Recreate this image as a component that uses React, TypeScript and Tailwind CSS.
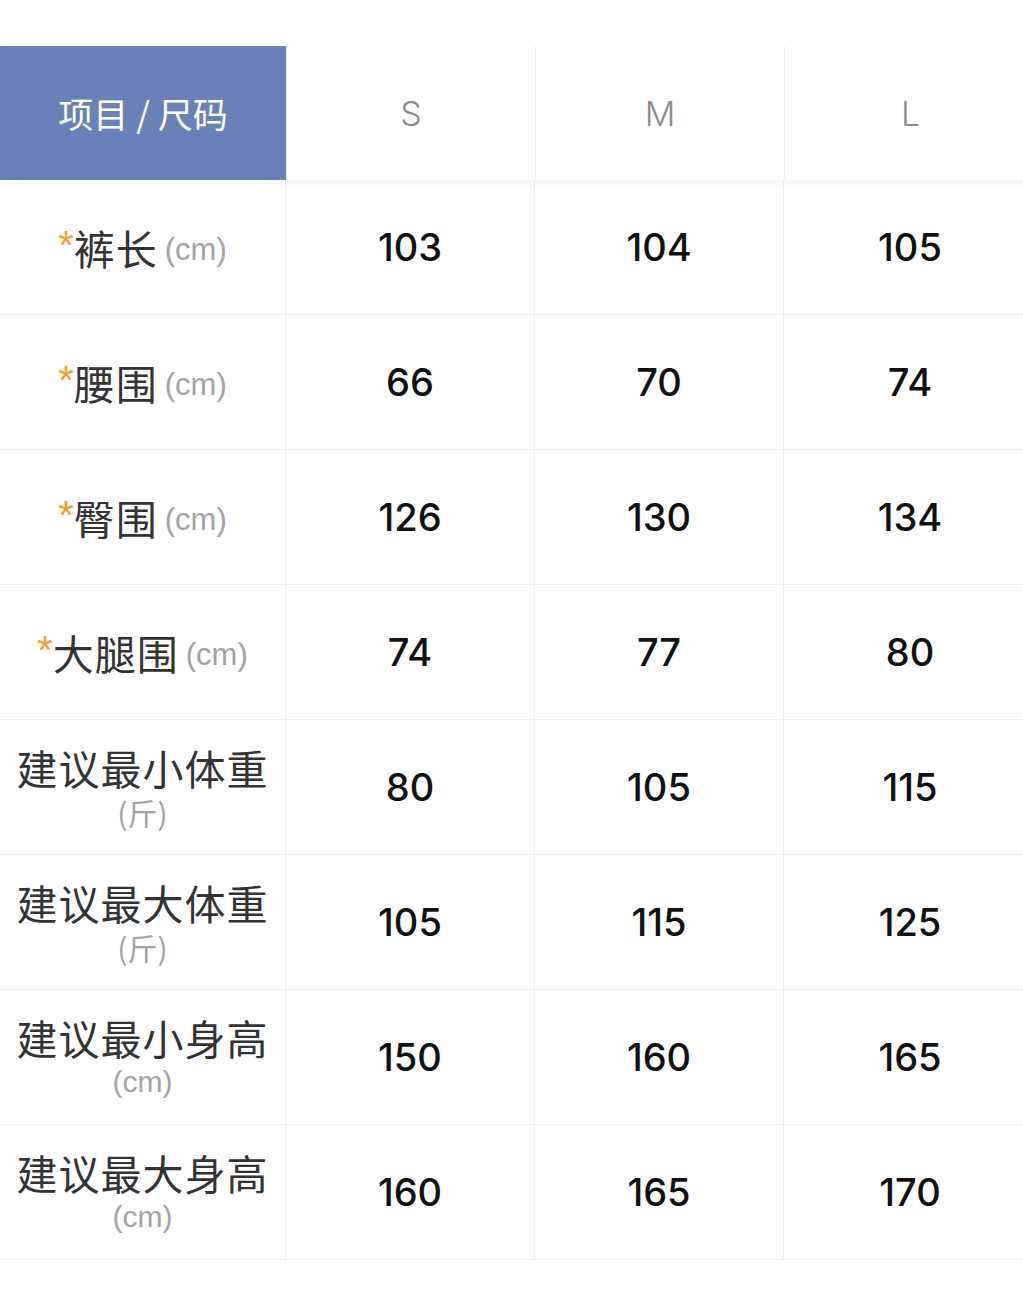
import React from "react";

type Row = {
  label: string;
  unit: string;
  star?: boolean;
  stacked?: boolean;
  values: string[];
};

const rows: Row[] = [
  { label: "裤长", unit: "(cm)", star: true, values: ["103", "104", "105"] },
  { label: "腰围", unit: "(cm)", star: true, values: ["66", "70", "74"] },
  { label: "臀围", unit: "(cm)", star: true, values: ["126", "130", "134"] },
  { label: "大腿围", unit: "(cm)", star: true, values: ["74", "77", "80"] },
  { label: "建议最小体重", unit: "(斤)", stacked: true, values: ["80", "105", "115"] },
  { label: "建议最大体重", unit: "(斤)", stacked: true, values: ["105", "115", "125"] },
  { label: "建议最小身高", unit: "(cm)", stacked: true, values: ["150", "160", "165"] },
  { label: "建议最大身高", unit: "(cm)", stacked: true, values: ["160", "165", "170"] },
];

const cjk = "font-['PingFang_SC','Noto_Sans_CJK_SC',sans-serif]";
const num = "font-['Inter','Noto_Sans',sans-serif]";
const latin = "font-['Liberation_Sans','Noto_Sans_CJK_SC',sans-serif]";

function Label({ row }: { row: Row }) {
  if (row.stacked) {
    return (
      <div className={`flex flex-col items-center ${cjk}`}>
        <span className="text-[41px] leading-[40px] tracking-[1px] text-[#333]">{row.label}</span>
        <span className={`mt-[9px] text-[30px] leading-[32px] text-[#a3a3a3] ${row.unit === "(cm)" ? latin : ""}`}>
          {row.unit}
        </span>
      </div>
    );
  }
  return (
    <div className={`flex items-center ${cjk}`}>
      {row.star && (
        <span className={`mb-[4px] text-[40px] leading-none text-[#f0a030] ${latin}`}>*</span>
      )}
      <span className="text-[41px] leading-none tracking-[1px] text-[#333]">{row.label}</span>
      <span className={`ml-[7px] mt-[4px] text-[31px] leading-none text-[#a3a3a3] ${latin}`}>{row.unit}</span>
    </div>
  );
}

export default function App() {
  return (
    <div className="w-[1023px] min-h-[1290px] overflow-hidden bg-white pt-[46px]">
      <div className="w-[1036px]">
        <div className="relative z-10 grid h-[134px] grid-cols-[286px_249px_249px_252px] shadow-[0_4px_10px_rgba(0,0,0,0.04)]">
          <div className={`flex items-center justify-center bg-[#6a81b7] text-[35px] text-white ${cjk}`}>
            项目 / 尺码
          </div>
          {["S", "M", "L"].map((s) => (
            <div
              key={s}
              className={`flex items-center justify-center border-l border-[#f1f1f1] text-[34px] font-light text-[#8a8a8a] ${num}`}
            >
              {s}
            </div>
          ))}
        </div>
        {rows.map((row) => (
          <div key={row.label} className="grid h-[135px] grid-cols-[286px_249px_249px_252px] border-b border-[#eeeeee]">
            <div className="flex items-center justify-center border-r border-[#eeeeee]">
              <Label row={row} />
            </div>
            {row.values.map((v, i) => (
              <div
                key={i}
                className={`flex items-center justify-center text-[38px] font-medium text-[#111] ${num} ${i < 2 ? "border-r border-[#eeeeee]" : ""}`}
              >
                {v}
              </div>
            ))}
          </div>
        ))}
      </div>
    </div>
  );
}
